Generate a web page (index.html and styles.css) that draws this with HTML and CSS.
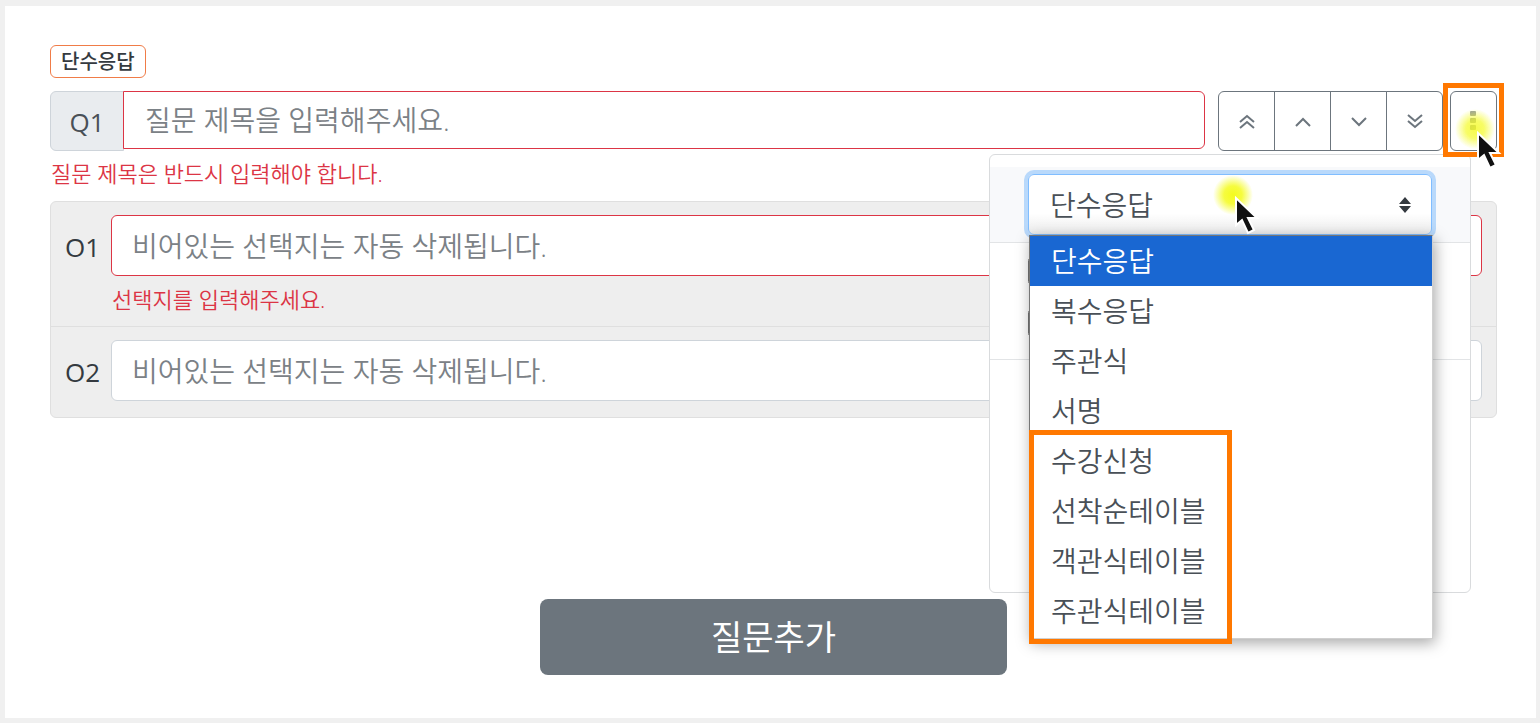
FILE: index.html
```html
<!DOCTYPE html>
<html lang="ko">

<head>
    <meta charset="utf-8">
    <meta name="viewport" content="width=device-width, initial-scale=1.0">
    <title>설문 만들기</title>
    <link rel="stylesheet" href="styles.css">
</head>

<body>
    <main class="card">
        <span class="badge">단수응답</span>

        <div class="question-row">
            <div class="input-group">
                <label class="prefix" for="question">Q1</label>
                <input class="field invalid" id="question" type="text" placeholder="질문 제목을 입력해주세요.">
            </div>
            <div class="btn-group">
                <button type="button" aria-label="맨 위로">
                    <svg width="16" height="16" viewBox="0 0 16 16"><path d="M1 9l7-6 7 6M1 15l7-6 7 6" /></svg>
                </button>
                <button type="button" aria-label="위로">
                    <svg width="16" height="16" viewBox="0 0 16 16"><path d="M1 13l7-7 7 7" /></svg>
                </button>
                <button type="button" aria-label="아래로">
                    <svg width="16" height="16" viewBox="0 0 16 16"><path d="M1 5l7 7 7-7" /></svg>
                </button>
                <button type="button" aria-label="맨 아래로">
                    <svg width="16" height="16" viewBox="0 0 16 16"><path d="M1 2l7 6 7-6M1 8l7 6 7-6" /></svg>
                </button>
            </div>
            <div class="more">
                <button class="more-btn" type="button" aria-label="더보기" aria-expanded="true">
                    <svg width="8" height="22" viewBox="0 0 8 22">
                        <rect x="0" y="1" width="6" height="5" rx="1" />
                        <rect x="0" y="8" width="6" height="5" rx="1" />
                        <rect x="0" y="15" width="6" height="5" rx="1" />
                    </svg>
                </button>

                <div class="menu">
                    <div class="menu-type">
                        <select class="type-select" aria-label="질문 유형">
                            <option>단수응답</option>
                        </select>
                        <svg class="caret" width="14" height="18" viewBox="0 0 14 18"><path d="M1 8l6-7 6 7zM1 10l6 7 6-7z" /></svg>
                        <ul class="type-list" role="listbox" aria-label="질문 유형 목록">
                            <li role="option" class="selected" aria-selected="true">단수응답</li>
                            <li role="option">복수응답</li>
                            <li role="option">주관식</li>
                            <li role="option">서명</li>
                            <li role="option">수강신청</li>
                            <li role="option">선착순테이블</li>
                            <li role="option">객관식테이블</li>
                            <li role="option">주관식테이블</li>
                            <li class="mark mark-list" role="presentation"></li>
                        </ul>
                        <svg class="pointer pointer-select" width="50" height="60" viewBox="0 0 50 60">
                            <defs>
                                <radialGradient id="glow">
                                    <stop offset="0" stop-color="#f4fb1e" />
                                    <stop offset=".45" stop-color="#f4fb1e" stop-opacity=".85" />
                                    <stop offset="1" stop-color="#f4fb1e" stop-opacity="0" />
                                </radialGradient>
                            </defs>
                            <circle cx="20" cy="20" r="20" fill="url(#glow)" />
                            <path d="M23 23v27l6-5 6 13 6-3-6-12h9z" />
                        </svg>
                    </div>
                    <div class="menu-options">
                        <input type="checkbox" aria-label="필수">
                        <input type="checkbox" aria-label="기타">
                    </div>
                </div>

                <div class="mark mark-more"></div>
                <svg class="pointer pointer-more" width="50" height="60" viewBox="0 0 50 60">
                    <circle cx="20" cy="20" r="20" fill="url(#glow)" />
                    <path d="M23 24v27l6-5 6 13 6-3-6-12h9z" />
                </svg>
            </div>
        </div>
        <p class="error">질문 제목은 반드시 입력해야 합니다.</p>

        <div class="options">
            <div class="option">
                <label for="option1">O1</label>
                <div class="option-body">
                    <input class="field invalid" id="option1" type="text" placeholder="비어있는 선택지는 자동 삭제됩니다.">
                    <p class="error">선택지를 입력해주세요.</p>
                </div>
            </div>
            <div class="option">
                <label for="option2">O2</label>
                <div class="option-body">
                    <input class="field" id="option2" type="text" placeholder="비어있는 선택지는 자동 삭제됩니다.">
                </div>
            </div>
        </div>

        <button class="add-btn" type="button">질문추가</button>
    </main>
</body>

</html>
```
FILE: styles.css
```css
* {
    box-sizing: border-box;
}

body {
    display: flex;
    min-height: 100vh;
    margin: 0;
    padding: 6px 4px 5px 5px;
    background-color: #f0f0f0;
    color: #343a40;
    font-family: "Open Sans", "Noto Sans CJK KR", sans-serif;
    font-size: 26px;
    line-height: 36px;
}

button,
input,
select {
    font: inherit;
}

.card {
    display: flex;
    flex-direction: column;
    flex: 1;
    min-width: 0;
    padding: 39px 39px 43px 45px;
    background-color: white;
}

.badge {
    align-self: flex-start;
    padding: 0 10px;
    border: 1px solid #f07c48;
    border-radius: 6px;
    font-size: 20px;
    font-weight: 500;
    line-height: 31px;
}

/* question title row */
.question-row {
    display: flex;
    height: 60px;
    margin-top: 13px;
}

.input-group {
    display: flex;
    flex: 1;
    align-items: flex-start;
    margin-right: 13px;
}

.prefix {
    width: 74px;
    height: 60px;
    border: 1px solid #ced4da;
    border-radius: 6px 0 0 6px;
    background-color: #e9ecef;
    color: #495057;
    line-height: 60px;
    text-align: center;
}

.field {
    width: 100%;
    min-width: 0;
    height: 61px;
    padding: 0 20px;
    border: 1px solid #ced4da;
    border-radius: 6px;
    background-color: white;
    font-size: 28px;
    font-weight: 350;
}

.field::placeholder {
    color: #7b8186;
    opacity: 1;
}

.field.invalid {
    border-color: #dc3545;
}

.input-group .field {
    flex: 1;
    height: 58px;
    margin-left: -1px;
    padding-left: 21px;
    border-radius: 0 6px 6px 0;
}

.btn-group {
    display: flex;
}

.btn-group button,
.more-btn {
    display: flex;
    align-items: center;
    justify-content: center;
    width: 57px;
    height: 60px;
    padding: 0;
    border: 1px solid #6c757d;
    background-color: white;
}

.btn-group button + button {
    margin-left: -1px;
}

.btn-group button:first-child {
    border-radius: 6px 0 0 6px;
}

.btn-group button:last-child {
    border-radius: 0 6px 6px 0;
}

.btn-group path {
    fill: none;
    stroke: #6c757d;
    stroke-width: 2;
}

.more {
    position: relative;
    margin-left: 7px;
}

.more-btn {
    width: 47px;
    border-radius: 6px;
}

.more-btn rect {
    fill: #6c757d;
}

/* dropdown of the question */
.menu {
    position: absolute;
    top: 63px;
    right: 26px;
    z-index: 1;
    width: 482px;
    height: 439px;
    padding-top: 12px;
    border: 1px solid #d9dbdd;
    border-radius: 6px;
    background-color: white;
}

.menu-type {
    position: relative;
    padding: 7px 38px;
    border-bottom: 1px solid #e2e4e6;
    background-color: #f8f9fb;
}

.type-select {
    display: block;
    width: 100%;
    height: 61px;
    padding: 0 21px;
    border: 1px solid #80bdff;
    border-radius: 6px;
    outline: none;
    appearance: none;
    background: linear-gradient(white 65%, #ececec);
    box-shadow: 0 0 0 4px #b9d9fb;
    color: #495057;
    font-size: 28px;
    font-weight: 350;
}

.caret {
    position: absolute;
    top: 29px;
    right: 58px;
    fill: #343a40;
}

.type-list {
    position: absolute;
    top: 68px;
    left: 39px;
    right: 37px;
    z-index: 1;
    margin: 0;
    padding: 0 0 2px;
    border: 1px solid #767676;
    border-right-color: #d0d0d0;
    border-bottom-color: #d0d0d0;
    background-color: white;
    box-shadow: 2px 4px 14px rgba(0, 0, 0, .35);
    color: #495057;
    font-size: 28px;
    font-weight: 350;
    line-height: 50px;
    list-style-type: none;
}

.type-list [role=option] {
    padding: 0 21px;
}

.type-list .selected {
    background-color: #1967d2;
    color: white;
}

.menu-options {
    display: flex;
    flex-direction: column;
    gap: 26px;
    height: 117px;
    padding: 15px 38px;
    border-bottom: 1px solid #e2e4e6;
}

.menu-options input {
    width: 26px;
    height: 26px;
    margin: 0;
}

/* guide marks over the page */
.mark {
    position: absolute;
    z-index: 2;
    border: 5px solid #ff7800;
    pointer-events: none;
}

.mark-more {
    inset: -8px -7px -6px;
}

.mark-list {
    top: 194px;
    bottom: -6px;
    left: -1px;
    width: 203px;
}

.pointer {
    position: absolute;
    z-index: 3;
    pointer-events: none;
}

.pointer path {
    fill: #111;
    stroke: white;
    stroke-width: 2;
}

.pointer-select {
    top: 8px;
    left: 223px;
}

.pointer-more {
    top: 18px;
    left: 5px;
}

/* keeps the dots of the button visible through the glow */
.pointer-more circle {
    mix-blend-mode: multiply;
    opacity: .8;
}

.more-btn svg {
    opacity: .7;
}

.error {
    margin: 6px 0 0 1px;
    color: #dc3545;
    font-size: 22px;
    font-weight: 350;
    line-height: 32px;
}

/* answers */
.options {
    margin-top: 12px;
    border: 1px solid #dfdfdf;
    border-radius: 6px;
    background-color: #eee;
}

.option {
    display: flex;
    padding: 13px 14px 12px;
}

.option + .option {
    border-top: 1px solid #dfdfdf;
}

.option label {
    width: 46px;
    line-height: 65px;
}

.option-body {
    flex: 1;
    min-width: 0;
}

.option-body .field {
    display: block;
}

.option-body .error {
    margin-top: 8px;
    line-height: 30px;
}

.add-btn {
    align-self: center;
    width: calc(100% / 3 - 15px);
    height: 76px;
    margin-top: auto;
    border: 0;
    border-radius: 8px;
    background-color: #6c757d;
    color: white;
    font-size: 34px;
}
```
